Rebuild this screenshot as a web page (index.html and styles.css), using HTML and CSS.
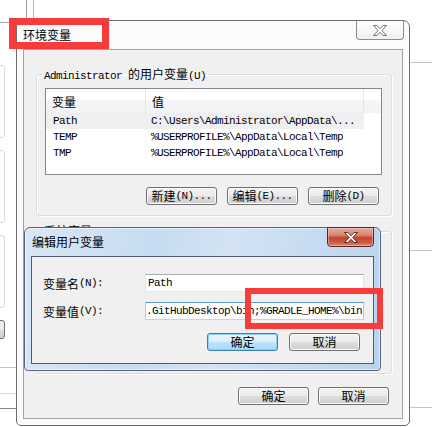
FILE: index.html
```html
<!DOCTYPE html>
<html lang="zh-CN">
<head>
<meta charset="utf-8">
<title>环境变量</title>
<link rel="stylesheet" href="styles.css">
</head>
<body>
<div class="desk">
  <div class="bg-top"></div>
  <div class="bg-left">
    <div class="bg-head"></div>
    <div class="bg-box first"></div>
    <div class="bg-box"></div>
    <div class="bg-box"></div>
    <div class="bg-btn"></div>
    <div class="bg-rule r1"></div>
    <div class="bg-rule r2"></div>
    <div class="bg-rule r3"></div>
  </div>
  <div class="bg-right">
    <div class="bg-rule q1"></div>
    <div class="bg-rule q2"></div>
    <div class="bg-rule q3"></div>
  </div>

  <div class="win main">
    <div class="titlebar">
      <span class="title">环境变量</span>
      <div class="close close-main">
        <svg width="14" height="11" viewBox="0 0 14 11"><path d="M0.5 0.5H3.8L7 3.6L10.2 0.5H13.5L8.9 5.5L13.5 10.5H10.2L7 7.4L3.8 10.5H0.5L5.1 5.5Z" fill="#fff" stroke="#6e6e6e" stroke-width="1" stroke-linejoin="round"/></svg>
      </div>
    </div>
    <div class="client">
      <fieldset class="group g1">
        <legend><span class="a">Administrator&nbsp;</span>的用户变量<span class="a">(U)</span></legend>
        <div class="list">
          <div class="lhead">
            <div class="hc c1">变量</div>
            <div class="hc c2">值</div>
            <div class="hc c3"></div>
          </div>
          <div class="row sel"><div class="c1 a">Path</div><div class="c2 a">C:\Users\Administrator\AppData\...</div></div>
          <div class="row"><div class="c1 a">TEMP</div><div class="c2 a">%USERPROFILE%\AppData\Local\Temp</div></div>
          <div class="row"><div class="c1 a">TMP</div><div class="c2 a">%USERPROFILE%\AppData\Local\Temp</div></div>
        </div>
        <div class="btnrow grp">
          <button class="btn">新建<span class="a">(N)...</span></button>
          <button class="btn">编辑<span class="a">(E)...</span></button>
          <button class="btn">删除<span class="a">(D)</span></button>
        </div>
      </fieldset>
      <fieldset class="group g2">
        <legend>系统变量<span class="a">(S)</span></legend>
      </fieldset>
      <div class="btnrow foot">
        <button class="btn">确定</button>
        <button class="btn">取消</button>
      </div>
    </div>
  </div>

  <div class="win dlg">
    <div class="titlebar dtitle">
      <span class="title">编辑用户变量</span>
      <div class="close close-dlg">
        <svg width="14" height="11" viewBox="0 0 14 11"><path d="M0.5 0.5H3.8L7 3.6L10.2 0.5H13.5L8.9 5.5L13.5 10.5H10.2L7 7.4L3.8 10.5H0.5L5.1 5.5Z" fill="#fff" stroke="#5a2620" stroke-width="1" stroke-linejoin="round"/></svg>
      </div>
    </div>
    <div class="client dclient">
      <div class="field">
        <label class="flabel">变量名<span class="a">(N):</span></label>
        <div class="tbox"><span class="a">Path</span></div>
      </div>
      <div class="field second">
        <label class="flabel">变量值<span class="a">(V):</span></label>
        <div class="tbox focus"><span class="a">.GitHubDesktop\bin;%GRADLE_HOME%\bin</span></div>
      </div>
      <div class="btnrow dbtns">
        <button class="btn default">确定</button>
        <button class="btn">取消</button>
      </div>
    </div>
  </div>

  <div class="mark m1"></div>
  <div class="mark m2"></div>
</div>
</body>
</html>
```

FILE: styles.css
```css
html, body {
  margin: 0;
  padding: 0;
  background: #ffffff;
}
body {
  font-family: "Noto Sans CJK SC", "Liberation Sans", sans-serif;
  font-size: 12px;
  color: #000;
}
.desk {
  position: relative;
  width: 432px;
  height: 427px;
  overflow: hidden;
  background: #fff;
}
.a {
  font-family: "Liberation Mono", "DejaVu Sans Mono", monospace;
  font-size: 11px;
  letter-spacing: -0.6px;
}

/* background windows */
.bg-top {
  position: absolute;
  left: 26px;
  top: 0;
  width: 6px;
  height: 20px;
  border-left: 1px solid #9c9c9c;
  border-right: 1px solid #b8b8b8;
}
.bg-left {
  position: absolute;
  left: 0;
  top: 0;
  width: 16px;
  height: 427px;
  display: flex;
  flex-direction: column;
}
.bg-head {
  height: 22px;
  border-bottom: 1px solid #a8a8a8;
}
.bg-box {
  margin-left: -10px;
  margin-top: 12px;
  width: 15px;
  height: 73px;
  box-sizing: border-box;
  border: 1px solid #d5dce4;
  border-radius: 3px;
  background: #fff;
}
.bg-box.first { margin-top: 42px; }
.bg-btn {
  margin-left: -10px;
  margin-top: 12px;
  width: 15px;
  height: 19px;
  box-sizing: border-box;
  border: 1px solid #707070;
  border-radius: 3px;
  background: linear-gradient(#f2f2f2 0%, #ebebeb 50%, #dddddd 51%, #cfcfcf 100%);
}
.bg-rule { height: 0; border-top: 1px solid #c4c4c4; }
.bg-left .r1 { margin-top: 28px; }
.bg-left .r2 { margin-top: 25px; border-top-color: #d6d6d6; }
.bg-left .r3 { margin-top: 14px; border-top-color: #8a8a8a; }
.bg-right {
  position: absolute;
  left: 410px;
  top: 0;
  width: 22px;
  display: flex;
  flex-direction: column;
}
.bg-right .q1 { margin-top: 62px; }
.bg-right .q2 { margin-top: 187px; }
.bg-right .q3 { margin-top: 156px; }

/* windows */
.win {
  position: absolute;
  box-sizing: border-box;
  display: flex;
  flex-direction: column;
}
.main {
  left: 16px;
  top: 20px;
  width: 394px;
  height: 406px;
  border: 1px solid #6c6c6c;
  border-radius: 7px 7px 5px 5px;
  background: #fbfbfb;
  padding: 0 6px 6px 6px;
  box-shadow: inset 0 0 0 1px #ffffff;
}
.titlebar {
  height: 28px;
  flex: none;
  display: flex;
  align-items: center;
}
.title {
  font-size: 12px;
  line-height: 16px;
  flex: 1;
}
.close {
  align-self: flex-start;
  box-sizing: border-box;
  display: flex;
  align-items: center;
  justify-content: center;
  border-radius: 0 0 4px 4px;
}
.close-main {
  width: 48px;
  height: 19px;
  margin-right: -1px;
  border: 1px solid #8c8c8c;
  border-top: none;
  background: linear-gradient(#ffffff, #f0f0f0);
}
.client {
  flex: 1;
  box-sizing: border-box;
  border: 1px solid #a3a3a3;
  background: #f0f0f0;
  display: flex;
  flex-direction: column;
}

/* group boxes */
.group {
  margin: 0;
  padding: 0;
  min-width: 0;
  box-sizing: border-box;
  width: 356px;
  border: 1px solid #d5dfe5;
  border-radius: 3px;
  box-shadow: inset 1px 1px 0 #ffffff, 1px 1px 0 #ffffff;
}
.group legend {
  margin-left: 5px;
  padding: 0 2px;
  height: 12px;
  line-height: 12px;
  font-size: 12px;
  white-space: nowrap;
}
.g1 {
  margin: 18px 0 0 12px;
  padding-bottom: 10px;
}
.g2 {
  margin: 9px 0 0 12px;
  height: 149px;
}

/* list view */
.list {
  margin: 8px 0 0 8px;
  width: 337px;
  height: 87px;
  box-sizing: border-box;
  border: 1px solid #828790;
  background: #fff;
}
.lhead {
  display: flex;
  height: 24px;
  background: linear-gradient(#ffffff 0%, #ffffff 45%, #f5f6f7 46%, #f1f2f4 100%);
}
.hc {
  box-sizing: border-box;
  border-right: 1px solid #e4e6e9;
  padding-left: 6px;
  display: flex;
  align-items: center;
  font-size: 12px;
}
.hc.c1 { width: 100px; }
.hc.c2 { width: 218px; }
.hc.c3 { width: 17px; border-right: none; }
.row {
  display: flex;
  width: 318px;
  height: 16px;
  align-items: center;
}
.row.sel { background: #efefef; }
.row .c1 { width: 100px; box-sizing: border-box; padding-left: 7px; }
.row .c2 { width: 218px; box-sizing: border-box; padding-left: 5px; white-space: nowrap; }

/* buttons */
.btnrow {
  display: flex;
  justify-content: flex-end;
}
.grp { margin-top: 12px; gap: 10px; padding-right: 12px; }
.foot { margin-top: 13px; gap: 9px; padding-right: 13px; }
.btn {
  width: 71px;
  height: 18px;
  box-sizing: border-box;
  margin: 0;
  padding: 0;
  border: 1px solid #707070;
  border-radius: 3px;
  background: linear-gradient(#f2f2f2 0%, #ebebeb 50%, #dddddd 51%, #cfcfcf 100%);
  box-shadow: inset 0 0 0 1px #fbfbfb;
  font-family: "Noto Sans CJK SC", "Liberation Sans", sans-serif;
  font-size: 12px;
  color: #000;
  display: flex;
  align-items: center;
  justify-content: center;
  line-height: 14px;
}
.btn.default {
  border-color: #3c7fb1;
  background: linear-gradient(#e9f5fc 0%, #d9eefa 50%, #bee4f9 51%, #a9d9f4 100%);
  box-shadow: inset 0 0 0 1px #8fd2f5;
}

/* dialog */
.dlg {
  left: 24px;
  top: 227px;
  width: 357px;
  height: 144px;
  border: 1px solid #56657a;
  border-radius: 6px 6px 4px 4px;
  padding: 0 6px 6px 6px;
  background: linear-gradient(100deg, #d9e7f6 0%, #c7dcf1 35%, #d3e3f4 55%, #bad3ee 100%);
  box-shadow: inset 0 0 0 1px rgba(255, 255, 255, 0.55);
}
.dtitle .title { padding-left: 1px; }
.close-dlg {
  width: 47px;
  height: 20px;
  margin-top: -1px;
  border: 1px solid #5e251c;
  background: linear-gradient(#e8aa9d 0%, #d98473 40%, #c4432c 55%, #cc5a43 80%, #db8a76 100%);
  box-shadow: inset 0 0 0 1px rgba(255, 220, 210, 0.45);
}
.dclient {
  border: 1px solid #4d5b6c;
  background: #f0f0f0;
  padding-top: 17px;
}
.field {
  display: flex;
  align-items: center;
  padding-left: 11px;
  height: 18px;
}
.field.second { margin-top: 10px; }
.flabel {
  width: 102px;
  flex: none;
  display: flex;
  align-items: center;
  font-size: 12px;
}
.tbox {
  width: 219px;
  height: 18px;
  box-sizing: border-box;
  border: 1px solid;
  border-color: #abadb3 #e2e3ea #e3e9ef #e2e3ea;
  background: #fff;
  padding-left: 2px;
  display: flex;
  align-items: center;
  overflow: hidden;
  white-space: nowrap;
}
.tbox.focus {
  border-color: #5d9ad0 #a4c9e3 #b7d9ed #b5cfe7;
  padding-left: 0;
}
.dbtns { margin-top: 13px; gap: 11px; padding-right: 13px; }

/* red annotation frames */
.mark {
  position: absolute;
  box-sizing: border-box;
  border-style: solid;
  border-color: #f83b3b;
}
.m1 {
  left: 9px;
  top: 18px;
  width: 100px;
  height: 31px;
  border-width: 7px;
}
.m2 {
  left: 245px;
  top: 288px;
  width: 138px;
  height: 41px;
  border-width: 6px;
}
```
